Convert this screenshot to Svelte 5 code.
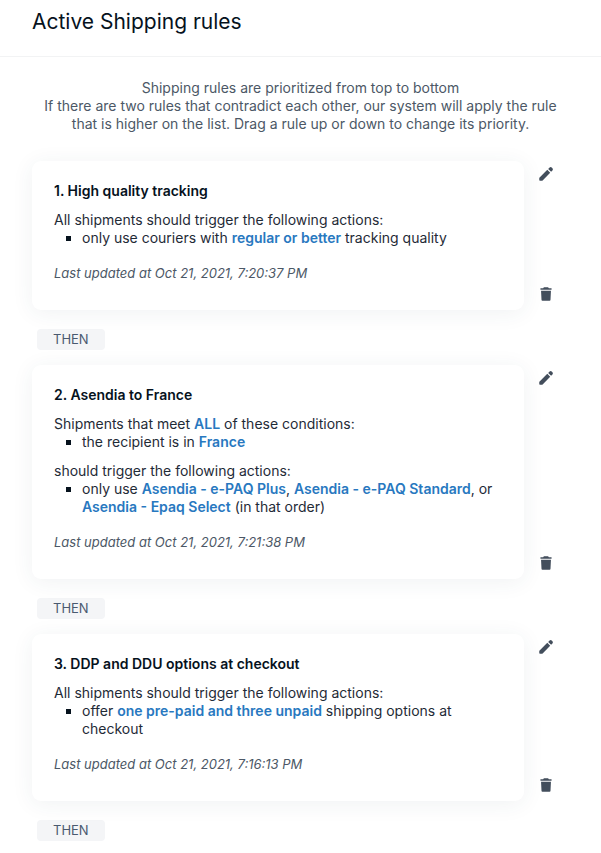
<script lang="ts">
  type Part = string | { mark: string };
  type Section = { intro: Part[]; items: Part[][] };
  type Rule = { title: string; sections: Section[]; updated: string };

  const rules: Rule[] = [
    {
      title: "High quality tracking",
      sections: [
        {
          intro: ["All shipments should trigger the following actions:"],
          items: [["only use couriers with ", { mark: "regular or better" }, " tracking quality"]],
        },
      ],
      updated: "Oct 21, 2021, 7:20:37 PM",
    },
    {
      title: "Asendia to France",
      sections: [
        {
          intro: ["Shipments that meet ", { mark: "ALL" }, " of these conditions:"],
          items: [["the recipient is in ", { mark: "France" }]],
        },
        {
          intro: ["should trigger the following actions:"],
          items: [
            [
              "only use ",
              { mark: "Asendia - e-PAQ Plus" },
              ", ",
              { mark: "Asendia - e-PAQ Standard" },
              ", or ",
              { mark: "Asendia - Epaq Select" },
              " (in that order)",
            ],
          ],
        },
      ],
      updated: "Oct 21, 2021, 7:21:38 PM",
    },
    {
      title: "DDP and DDU options at checkout",
      sections: [
        {
          intro: ["All shipments should trigger the following actions:"],
          items: [
            ["offer ", { mark: "one pre-paid and three unpaid" }, " shipping options at checkout"],
          ],
        },
      ],
      updated: "Oct 21, 2021, 7:16:13 PM",
    },
  ];
</script>

{#snippet text(parts: Part[])}
  {#each parts as part}{#if typeof part === "string"}{part}{:else}<strong>{part.mark}</strong>{/if}{/each}
{/snippet}

<header>
  <h1>Active Shipping rules</h1>
</header>

<main>
  <p class="hint">
    Shipping rules are prioritized from top to bottom<br />
    If there are two rules that contradict each other, our system will apply the rule that is higher
    on the list. Drag a rule up or down to change its priority.
  </p>

  <ol class="rules">
    {#each rules as rule, i}
      <li>
        <div class="row">
          <article class="card">
            <h2>{i + 1}. {rule.title}</h2>
            {#each rule.sections as section}
              <p class="intro">{@render text(section.intro)}</p>
              <ul>
                {#each section.items as item}
                  <li>{@render text(item)}</li>
                {/each}
              </ul>
            {/each}
            <p class="updated">Last updated at {rule.updated}</p>
          </article>

          <div class="actions">
            <button type="button" aria-label="Edit rule {i + 1}">
              <svg viewBox="0 0 24 24">
                <path d="M3 17.6v2.4a1 1 0 0 0 1 1h2.4a1.6 1.6 0 0 0 1.1-.5L17.6 10.3l-3.9-3.9L3.5 16.5a1.6 1.6 0 0 0-.5 1.1z" />
                <path d="M14.9 5.2l1.9-1.8a2 2 0 0 1 2.8 0l1 1a2 2 0 0 1 0 2.8l-1.8 1.9z" />
              </svg>
            </button>
            <button type="button" aria-label="Delete rule {i + 1}">
              <svg viewBox="0 0 24 24">
                <path d="M9.2 3h5.6l1 1.2h3.6v2.2H4.6V4.2h3.6z" />
                <path d="M5.4 7.6h13.2l-.6 12.2a1.2 1.2 0 0 1-1.2 1.2H7.2a1.2 1.2 0 0 1-1.2-1.2z" />
              </svg>
            </button>
          </div>
        </div>
        <span class="then">THEN</span>
      </li>
    {/each}
  </ol>
</main>

<style>
  :global(body) {
    margin: 0;
    background: #fff;
    color: #1f2b37;
    font-family: Inter, "Liberation Sans", sans-serif;
    font-size: 14px;
    line-height: 18px;
  }

  h1,
  h2,
  p,
  ol,
  ul {
    margin: 0;
    padding: 0;
  }

  header {
    padding: 8px 32px 20px;
    border-bottom: 1px solid #f2f3f4;
  }

  h1 {
    color: #06121d;
    font-size: 21px;
    font-weight: 400;
    line-height: 28px;
  }

  main {
    padding: 22px 32px 0;
  }

  .hint {
    padding: 0 8px;
    color: #4c5866;
    text-align: center;
  }

  .rules {
    margin-top: 28px;
    list-style: none;
  }

  .row {
    display: flex;
    gap: 13px;
  }

  .card {
    flex: 1;
    min-width: 0;
    padding: 21px 22px 28px;
    border-radius: 9px;
    background: #fff;
    box-shadow: 0 3px 22px rgba(40, 70, 80, 0.07);

    h2 {
      color: #06121d;
      font-size: 14px;
      font-weight: 600;
      line-height: 18px;
    }

    ul {
      padding-left: 28px;
      list-style: square;
    }

    li::marker {
      color: #06121d;
    }

    strong {
      color: #2878c0;
      font-weight: 600;
    }
  }

  .intro {
    margin-top: 11px;
  }

  .updated {
    margin-top: 17px;
    color: #4c5866;
    font-size: 13px;
    font-style: italic;
  }

  .actions {
    display: flex;
    flex-direction: column;
    justify-content: space-between;
    padding: 4px 14px 7px 0;
  }

  button {
    display: grid;
    padding: 0;
    border: none;
    background: none;
    color: #434e5c;
    cursor: pointer;
  }

  svg {
    width: 18px;
    height: 18px;
    fill: currentColor;
  }

  .then {
    display: block;
    width: fit-content;
    margin: 19px 5px 15px;
    padding: 0 16px;
    border-radius: 4px;
    background: #f4f5f7;
    color: #4a5a70;
    font-size: 13px;
    line-height: 21px;
  }
</style>
